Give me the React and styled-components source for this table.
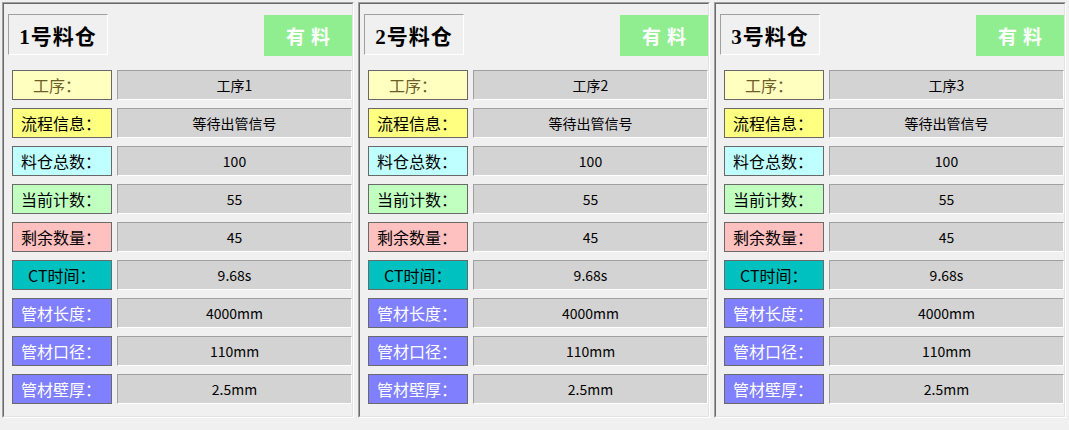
import React from 'react';
import styled, { createGlobalStyle } from 'styled-components';

const GlobalStyle = createGlobalStyle`
  html, body {
    margin: 0;
    padding: 0;
    background: #f0f0f0;
  }
  body {
    font-family: "Noto Sans CJK SC", "Liberation Sans", sans-serif;
  }
`;

const Page = styled.div`
  display: flex;
  gap: 4px;
  padding: 2px;
  width: 1069px;
  height: 430px;
  box-sizing: border-box;
  background: #f0f0f0;
`;

const Panel = styled.section`
  width: 352px;
  height: 416px;
  box-sizing: border-box;
  border-top: 1px solid #a0a0a0;
  border-left: 1px solid #a0a0a0;
  border-right: 1px solid #ffffff;
  border-bottom: 1px solid #ffffff;
  background: #f0f0f0;
`;

const PanelInner = styled.div`
  height: 100%;
  box-sizing: border-box;
  border-top: 1px solid #696969;
  border-left: 1px solid #696969;
  border-right: 1px solid #e3e3e3;
  border-bottom: 1px solid #e3e3e3;
  display: flex;
  flex-direction: column;
`;

const Header = styled.div`
  display: flex;
  justify-content: space-between;
  align-items: flex-start;
  padding: 10px 0 0 4px;
  height: 41px;
  margin-bottom: 15px;
`;

const TitleBox = styled.div`
  width: 100px;
  height: 41px;
  box-sizing: border-box;
  border-top: 1px solid #a0a0a0;
  border-left: 1px solid #a0a0a0;
  border-right: 1px solid #ffffff;
  border-bottom: 1px solid #ffffff;
  display: flex;
  align-items: center;
  justify-content: center;
  font-size: 21px;
  font-weight: 700;
  color: #000;
  letter-spacing: 1px;
  font-family: "Liberation Serif", "Noto Sans CJK SC", serif;
`;

const Badge = styled.div`
  width: 88px;
  height: 41px;
  margin-top: 1px;
  background: #90ee90;
  color: #ffffff;
  display: flex;
  align-items: center;
  justify-content: center;
  font-size: 19px;
  font-weight: 700;
  letter-spacing: 6px;
  text-indent: 6px;
`;

const Rows = styled.div`
  display: flex;
  flex-direction: column;
  gap: 8px;
  padding-left: 8px;
`;

const Row = styled.div`
  display: flex;
  gap: 5px;
  height: 30px;
`;

const Label = styled.div`
  width: 100px;
  height: 30px;
  box-sizing: border-box;
  border: 1px solid #696969;
  background: ${(p) => p.$bg};
  color: ${(p) => p.$fg || '#000'};
  display: flex;
  align-items: center;
  padding-left: ${(p) => p.$indent || 8}px;
  font-size: 16px;
  white-space: nowrap;
`;

const Value = styled.div`
  flex: 1;
  height: 30px;
  box-sizing: border-box;
  border-top: 1px solid #a0a0a0;
  border-left: 1px solid #a0a0a0;
  border-right: 1px solid #ffffff;
  border-bottom: 1px solid #ffffff;
  background: #d3d3d3;
  display: flex;
  align-items: center;
  justify-content: center;
  font-size: 14px;
  color: #000;
`;

const fields = [
  { key: 'proc', label: '工序：', bg: '#ffffc0', fg: '#6e5c28', indent: 20 },
  { key: 'flow', label: '流程信息：', bg: '#ffff80' },
  { key: 'total', label: '料仓总数：', bg: '#c0ffff' },
  { key: 'count', label: '当前计数：', bg: '#c0ffc0' },
  { key: 'left', label: '剩余数量：', bg: '#ffc0c0' },
  { key: 'ct', label: 'CT时间：', bg: '#00c0c0', indent: 15 },
  { key: 'len', label: '管材长度：', bg: '#8080ff', fg: '#fff' },
  { key: 'dia', label: '管材口径：', bg: '#8080ff', fg: '#fff' },
  { key: 'wall', label: '管材壁厚：', bg: '#8080ff', fg: '#fff' },
];

const bins = [1, 2, 3].map((n) => ({
  id: n,
  status: '有料',
  values: {
    proc: `工序${n}`,
    flow: '等待出管信号',
    total: '100',
    count: '55',
    left: '45',
    ct: '9.68s',
    len: '4000mm',
    dia: '110mm',
    wall: '2.5mm',
  },
}));

const BinPanel = ({ bin }) => (
  <Panel>
    <PanelInner>
      <Header>
        <TitleBox>{bin.id}号料仓</TitleBox>
        <Badge>{bin.status}</Badge>
      </Header>
      <Rows>
        {fields.map((f) => (
          <Row key={f.key}>
            <Label $bg={f.bg} $fg={f.fg} $indent={f.indent}>
              {f.label}
            </Label>
            <Value>{bin.values[f.key]}</Value>
          </Row>
        ))}
      </Rows>
    </PanelInner>
  </Panel>
);

export default function App() {
  return (
    <>
      <GlobalStyle />
      <Page>
        {bins.map((b) => (
          <BinPanel key={b.id} bin={b} />
        ))}
      </Page>
    </>
  );
}
